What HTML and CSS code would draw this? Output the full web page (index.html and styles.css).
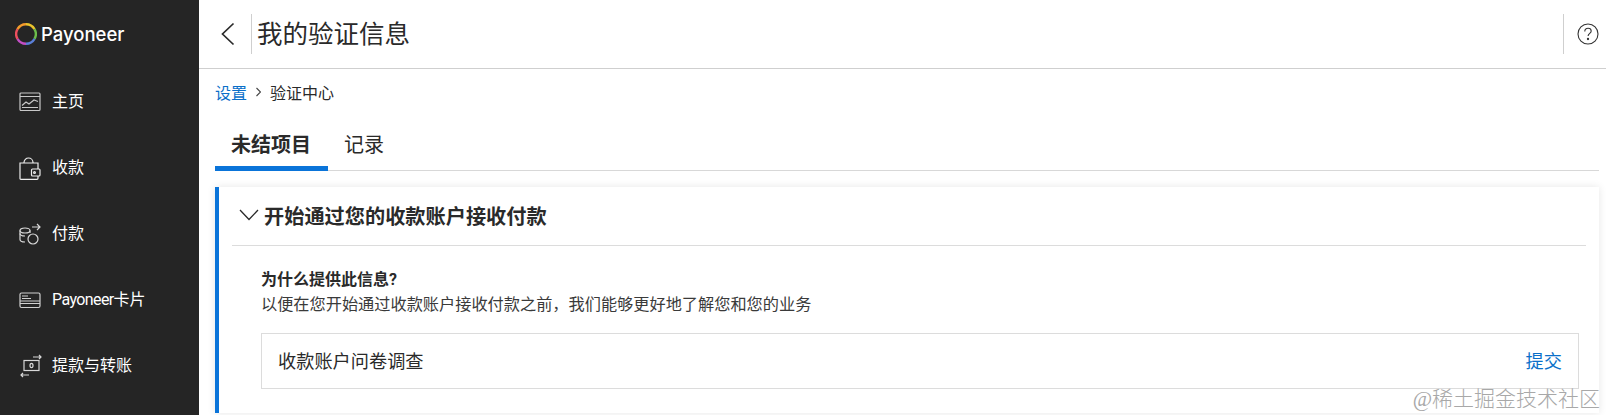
FILE: index.html
```html
<!DOCTYPE html>
<html lang="zh-CN">
<head>
<meta charset="utf-8">
<title>我的验证信息</title>
<link rel="stylesheet" href="styles.css">
</head>
<body>
<div class="app">
  <aside class="sidebar">
    <div class="logo">
      <svg class="logo-ring" width="22" height="22" viewBox="0 0 22 22">
        <g fill="none" stroke-width="2.4">
          <path d="M11 1.200A9.800 9.800 0 0 1 19.500 6.100" stroke="#e9c32c"/>
          <path d="M19.500 6.100A9.800 9.800 0 0 1 19.500 15.900" stroke="#6cbf4b"/>
          <path d="M19.500 15.900A9.800 9.800 0 0 1 11 20.800" stroke="#5a7fd8"/>
          <path d="M11 20.800A9.800 9.800 0 0 1 2.500 15.900" stroke="#c24fc4"/>
          <path d="M2.500 15.900A9.800 9.800 0 0 1 2.500 6.100" stroke="#ee4f5e"/>
          <path d="M2.500 6.100A9.800 9.800 0 0 1 11 1.200" stroke="#f39a2b"/>
        </g>
      </svg>
      <span class="logo-text">Payoneer</span>
    </div>
    <nav class="nav">
      <a class="nav-item">
        <svg class="nav-icon" width="22" height="20" viewBox="0 0 22 20" fill="none" stroke="#c8c8c8" stroke-width="1.2"><rect x="1" y="1" width="20" height="17.500" rx="1"/><path d="M1 4.500h20M3 15.500h16"/><path d="M3 13.500l4-3.500 3 2 5-4 4 1.500"/></svg>
        <span>主页</span>
      </a>
      <a class="nav-item">
        <svg class="nav-icon" width="22" height="23" viewBox="0 0 22 23" fill="none" stroke="#ededed" stroke-width="1.2"><path d="M19 12V6H1v15.500a.8.800 0 0 0 .8.800H18a1 1 0 0 0 1-1V19"/><path d="M5 6V5.500a4.500 4.500 0 0 1 9 0V6"/><rect x="12.500" y="12" width="8.500" height="7" rx="1"/><circle cx="15.500" cy="15.500" r=".9"/></svg>
        <span>收款</span>
      </a>
      <a class="nav-item">
        <svg class="nav-icon" width="22" height="22" viewBox="0 0 22 22" fill="none" stroke="#d8d8d8" stroke-width="1.2"><path d="M11 10V7.500C11 6 9 5 6 5S1 6 1 7.500v9C1 18 3 19 6 19"/><path d="M1 10.500c0 1.500 2 2.500 5 2.500M1 7.500C1 9 3 10 6 10s5-1 5-2.500"/><circle cx="14" cy="16" r="5"/><path d="M13 4h8M18 1l3 3-3 3"/></svg>
        <span>付款</span>
      </a>
      <a class="nav-item">
        <svg class="nav-icon" width="22" height="17" viewBox="0 0 22 17" fill="none" stroke="#d0d0d0" stroke-width="1.2"><rect x="1" y="1" width="20" height="14.500" rx="1.500"/><path d="M1 9h20M1 11.500h20M3 4h6M3 6.500h9"/></svg>
        <span><span class="brand">Payoneer</span>卡片</span>
      </a>
      <a class="nav-item">
        <svg class="nav-icon" width="24" height="24" viewBox="0 0 24 24" fill="none" stroke="#d8d8d8" stroke-width="1.200"><rect x="5" y="6.500" width="15" height="10"/><path d="M14 3h8M20 1l2 2-2 2M2 21h8M4 19l-2 2 2 2"/><ellipse cx="12.500" cy="11.500" rx="1.500" ry="2.200"/></svg>
        <span>提款与转账</span>
      </a>
    </nav>
  </aside>
  <main class="main">
    <header class="topbar">
      <button class="back" aria-label="返回">
        <svg width="15" height="24" viewBox="0 0 15 24" fill="none" stroke="#2a2a2a" stroke-width="1.700"><path d="M13.500 1.500L2.500 12l11 10.500"/></svg>
      </button>
      <h1 class="page-title">我的验证信息</h1>
      <div class="help">
        <svg width="22" height="22" viewBox="0 0 22 22" fill="none" stroke="#333" stroke-width="1.100"><circle cx="11" cy="11" r="10"/><path d="M7.800 8.500c0-2 1.500-3.200 3.300-3.200s3.100 1.200 3.100 2.800c0 2.300-3.100 2.400-3.100 5"/><circle cx="11" cy="16" r=".6" fill="#333"/></svg>
      </div>
    </header>
    <div class="content">
      <div class="crumbs">
        <a class="crumb-link">设置</a>
        <svg class="crumb-sep" width="5" height="10" viewBox="0 0 5 10" fill="none" stroke="#444" stroke-width="1.100"><path d="M.5 1l4 4-4 4"/></svg>
        <span>验证中心</span>
      </div>
      <div class="tabs">
        <a class="tab tab-active">未结项目</a>
        <a class="tab">记录</a>
      </div>
      <section class="card">
        <div class="card-head">
          <svg width="20" height="12" viewBox="0 0 20 12" fill="none" stroke="#2a2a2a" stroke-width="1.300"><path d="M1 1l9 9.500L19 1"/></svg>
          <h2 class="card-title">开始通过您的收款账户接收付款</h2>
        </div>
        <div class="card-body">
          <p class="why">为什么提供此信息?</p>
          <p class="desc">以便在您开始通过收款账户接收付款之前，我们能够更好地了解您和您的业务</p>
          <div class="task">
            <span class="task-label">收款账户问卷调查</span>
            <a class="task-action">提交</a>
          </div>
        </div>
      </section>
    </div>
  </main>
</div>
<div class="watermark">@稀土掘金技术社区</div>
</body>
</html>
```
FILE: styles.css
```css
* { box-sizing: border-box; }
html, body { height: 100%; }
body {
  margin: 0;
  overflow: hidden;
  background: #fff;
  color: #2a2a2a;
  font-family: Roboto, "Noto Sans CJK SC", sans-serif;
}
.app { display: flex; height: 415px; }
.sidebar {
  flex: 0 0 199px;
  background: #252525;
  color: #fff;
}
.logo {
  display: flex;
  align-items: center;
  gap: 4px;
  height: 68px;
  padding-left: 15px;
}
.logo-text {
  font-family: Inter, sans-serif;
  font-size: 18.5px;
  font-weight: 500;
  color: #fff;
}
.nav { display: flex; flex-direction: column; }
.nav-item {
  display: grid;
  grid-template-columns: 33px 1fr;
  align-items: center;
  height: 66px;
  padding-left: 19px;
  font-size: 16px;
  font-weight: 400;
}
.nav-item > span { margin-top: -2px; }
.nav-icon { margin-top: 2px; }
.brand { letter-spacing: -.6px; }
.main { flex: 1; min-width: 0; display: flex; flex-direction: column; }
.topbar {
  flex: 0 0 69px;
  display: flex;
  align-items: center;
  border-bottom: 1px solid #cfcfcf;
}
.back {
  flex: 0 0 53px;
  height: 40px;
  padding: 0 0 0 21px;
  background: none;
  border: 0;
  border-right: 1px solid #cfcfcf;
  text-align: left;
}
.back svg { display: block; }
.page-title {
  margin: 0 0 0 5px;
  padding-bottom: 6px;
  flex: 1;
  font-size: 25.5px;
  font-weight: 400;
}
.help {
  flex: 0 0 43px;
  height: 40px;
  padding: 9px 0 0 13px;
  border-left: 1px solid #cfcfcf;
}
.help svg { display: block; }
.content { flex: 1; padding: 0 7px 0 16px; }
.crumbs {
  display: flex;
  align-items: center;
  gap: 9px;
  height: 45px;
  font-size: 16px;
}
.crumb-link, .task-action { color: #0a6fc9; }
.tabs {
  display: flex;
  height: 57px;
  border-bottom: 1px solid #d8d8d8;
}
.tab {
  display: flex;
  align-items: center;
  margin-bottom: -1px;
  padding: 7px 16px 0;
  border-bottom: 5px solid transparent;
  font-size: 20px;
}
.tab-active {
  font-weight: 700;
  padding-right: 17px;
  border-bottom-color: #0a74d9;
}
.card {
  margin-top: 16px;
  height: 226px;
  background: #fff;
  border-left: 4px solid #0a74d9;
  box-shadow: 0 0 8px rgba(0, 0, 0, .1);
}
.card-head {
  display: flex;
  align-items: center;
  gap: 5px;
  height: 59px;
  margin: 0 13px;
  padding: 0 0 2px 7px;
  border-bottom: 1px solid #dcdcdc;
}
.card-title { margin: 0; font-size: 20.2px; font-weight: 700; }
.card-body { padding: 22px 20px 0 42px; }
.why { margin: 0; font-size: 16px; font-weight: 700; line-height: 24px; }
.desc { margin: 0; font-size: 16.2px; line-height: 26px; color: #3a3a3a; }
.task {
  display: flex;
  justify-content: space-between;
  align-items: center;
  height: 56px;
  margin-top: 15px;
  padding: 0 16px;
  border: 1px solid #dcdcdc;
  font-size: 18.2px;
}
.task-label { margin-top: -3px; }
.task-action { margin-top: -3px; }
.watermark {
  position: absolute;
  right: 6px;
  bottom: 3px;
  font-family: "Liberation Serif", "Noto Sans CJK SC", serif;
  font-size: 21px;
  font-weight: 300;
  color: #a8a8a8;
}
```
